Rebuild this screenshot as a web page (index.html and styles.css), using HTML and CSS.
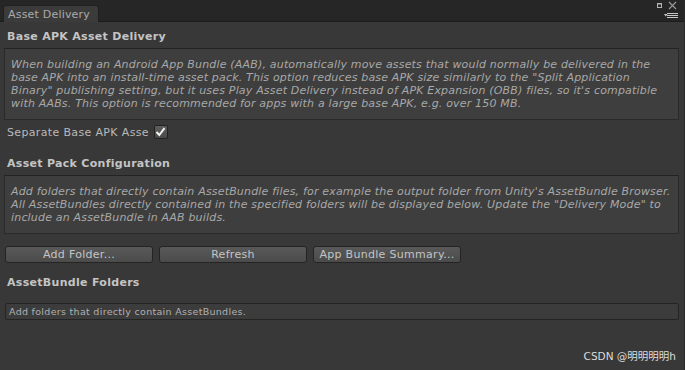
FILE: index.html
```html
<!DOCTYPE html>
<html lang="en">
<head>
  <meta charset="UTF-8" />
  <title>Asset Delivery</title>
  <link rel="stylesheet" href="styles.css">
</head>
<body>
  <div class="window">
    <div class="titlebar">
      <div class="tab">Asset Delivery</div>
      <div class="win-icons">
        <svg width="24" height="20" viewBox="0 0 24 20">
          <rect x="2.5" y="3.5" width="4" height="4" fill="none" stroke="#b4b4b4" stroke-width="1"/>
          <rect x="2" y="3" width="5" height="1.5" fill="#b4b4b4"/>
          <path d="M14 2 L21 9 M21 2 L14 9" stroke="#9a9a9a" stroke-width="1.1"/>
          <path d="M9 14 L12.5 14 L10.75 16.5 Z" fill="#c8c8c8"/>
          <path d="M12 13.5 H23 M12 15.5 H23 M12 17.5 H23" stroke="#c8c8c8" stroke-width="1"/>
        </svg>
      </div>
    </div>

    <main class="content">
      <h2 class="section-title">Base APK Asset Delivery</h2>
      <div class="help-box">
        When building an Android App Bundle (AAB), automatically move assets that would normally be delivered in the<br>
        base APK into an install-time asset pack. This option reduces base APK size similarly to the "Split Application<br>
        Binary" publishing setting, but it uses Play Asset Delivery instead of APK Expansion (OBB) files, so it's compatible<br>
        with AABs. This option is recommended for apps with a large base APK, e.g. over 150 MB.
      </div>

      <label class="toggle-row">
        <span class="toggle-label">Separate Base APK Asse</span>
        <span class="checkbox">
          <svg width="11" height="10" viewBox="0 0 11 10">
            <path d="M1.5 5 L4.3 8 L9.5 1.2" fill="none" stroke="#f2f2f2" stroke-width="2"/>
          </svg>
        </span>
      </label>

      <h2 class="section-title">Asset Pack Configuration</h2>
      <div class="help-box">
        Add folders that directly contain AssetBundle files, for example the output folder from Unity's AssetBundle Browser.<br>
        All AssetBundles directly contained in the specified folders will be displayed below. Update the "Delivery Mode" to<br>
        include an AssetBundle in AAB builds.
      </div>

      <div class="button-row">
        <button class="btn">Add Folder...</button>
        <button class="btn">Refresh</button>
        <button class="btn">App Bundle Summary...</button>
      </div>

      <h2 class="section-title section-title-tight">AssetBundle Folders</h2>
      <div class="folder-field">Add folders that directly contain AssetBundles.</div>
    </main>

    <div class="watermark">CSDN @明明明明h</div>
  </div>
</body>
</html>
```

FILE: styles.css
```css
/* Base */
body {
  margin: 0;
  padding: 0;
  background-color: #383838;
  font-family: 'DejaVu Sans', 'Noto Sans CJK SC', sans-serif;
  color: #b4b4b4;
}

.window {
  position: relative;
  width: 685px;
  height: 370px;
  overflow: hidden;
  border-right: 1px solid #2a2a2a;
  box-sizing: border-box;
}

/* Title bar / tab */
.titlebar {
  display: flex;
  justify-content: space-between;
  align-items: flex-end;
  height: 22px;
  background-color: #262626;
  border-bottom: 1px solid #1c1c1c;
  box-sizing: border-box;
  padding: 0 5px 0 3px;
}

.tab {
  height: 17px;
  width: 96px;
  box-sizing: border-box;
  padding: 2px 0 0 4px;
  background-color: #3b3b3b;
  border: 1px solid #202020;
  border-bottom: none;
  border-radius: 3px 3px 0 0;
  font-size: 11px;
  letter-spacing: 0.2px;
  color: #aaaaaa;
  margin-bottom: -1px;
}

.win-icons {
  align-self: flex-start;
  line-height: 0;
}

/* Content */
.content {
  padding: 0 5px 0 4px;
}

.section-title {
  margin: 0;
  padding: 8px 0 4px 3px;
  font-size: 11px;
  line-height: 14px;
  font-weight: bold;
  letter-spacing: 0.3px;
  color: #c4c4c4;
}

.section-title-tight {
  padding-top: 13px;
}

.help-box {
  background-color: #3e3e3e;
  border: 1px solid #2a2a2a;
  border-top-color: #232323;
  padding: 9px 6px 9px 6px;
  font-size: 11px;
  line-height: 13px;
  letter-spacing: 0.18px;
  font-style: italic;
  white-space: nowrap;
  color: #a8a8a8;
}

.toggle-row {
  display: flex;
  align-items: center;
  gap: 5px;
  margin: 5px 0 10px 3px;
  height: 14px;
}

.toggle-label {
  font-size: 11px;
  letter-spacing: 0.35px;
  color: #b8b8b8;
}

.checkbox {
  display: flex;
  align-items: center;
  justify-content: center;
  width: 12px;
  height: 12px;
  background: linear-gradient(#5e5e5e, #4a4a4a);
  border: 1px solid #222;
  border-radius: 2px;
}

/* Buttons */
.button-row {
  display: flex;
  gap: 6px;
  padding: 12px 0 0 1px;
}

.btn {
  width: 148px;
  height: 17px;
  padding: 0;
  background: linear-gradient(#595959, #4b4b4b);
  border: 1px solid #242424;
  border-radius: 3px;
  font-family: 'DejaVu Sans', sans-serif;
  font-size: 11px;
  letter-spacing: 0.3px;
  color: #c4c4c4;
  cursor: pointer;
}

.folder-field {
  margin: 9px 0 0 1px;
  height: 17px;
  box-sizing: border-box;
  background-color: #3c3c3c;
  border: 1px solid #242424;
  border-radius: 2px;
  padding: 1px 3px 0 3px;
  font-size: 9.5px;
  line-height: 14px;
  letter-spacing: 0.3px;
  color: #b0b0b0;
}

.watermark {
  position: absolute;
  right: 8px;
  bottom: 7px;
  font-size: 10.5px;
  color: #dcdcdc;
}
```
